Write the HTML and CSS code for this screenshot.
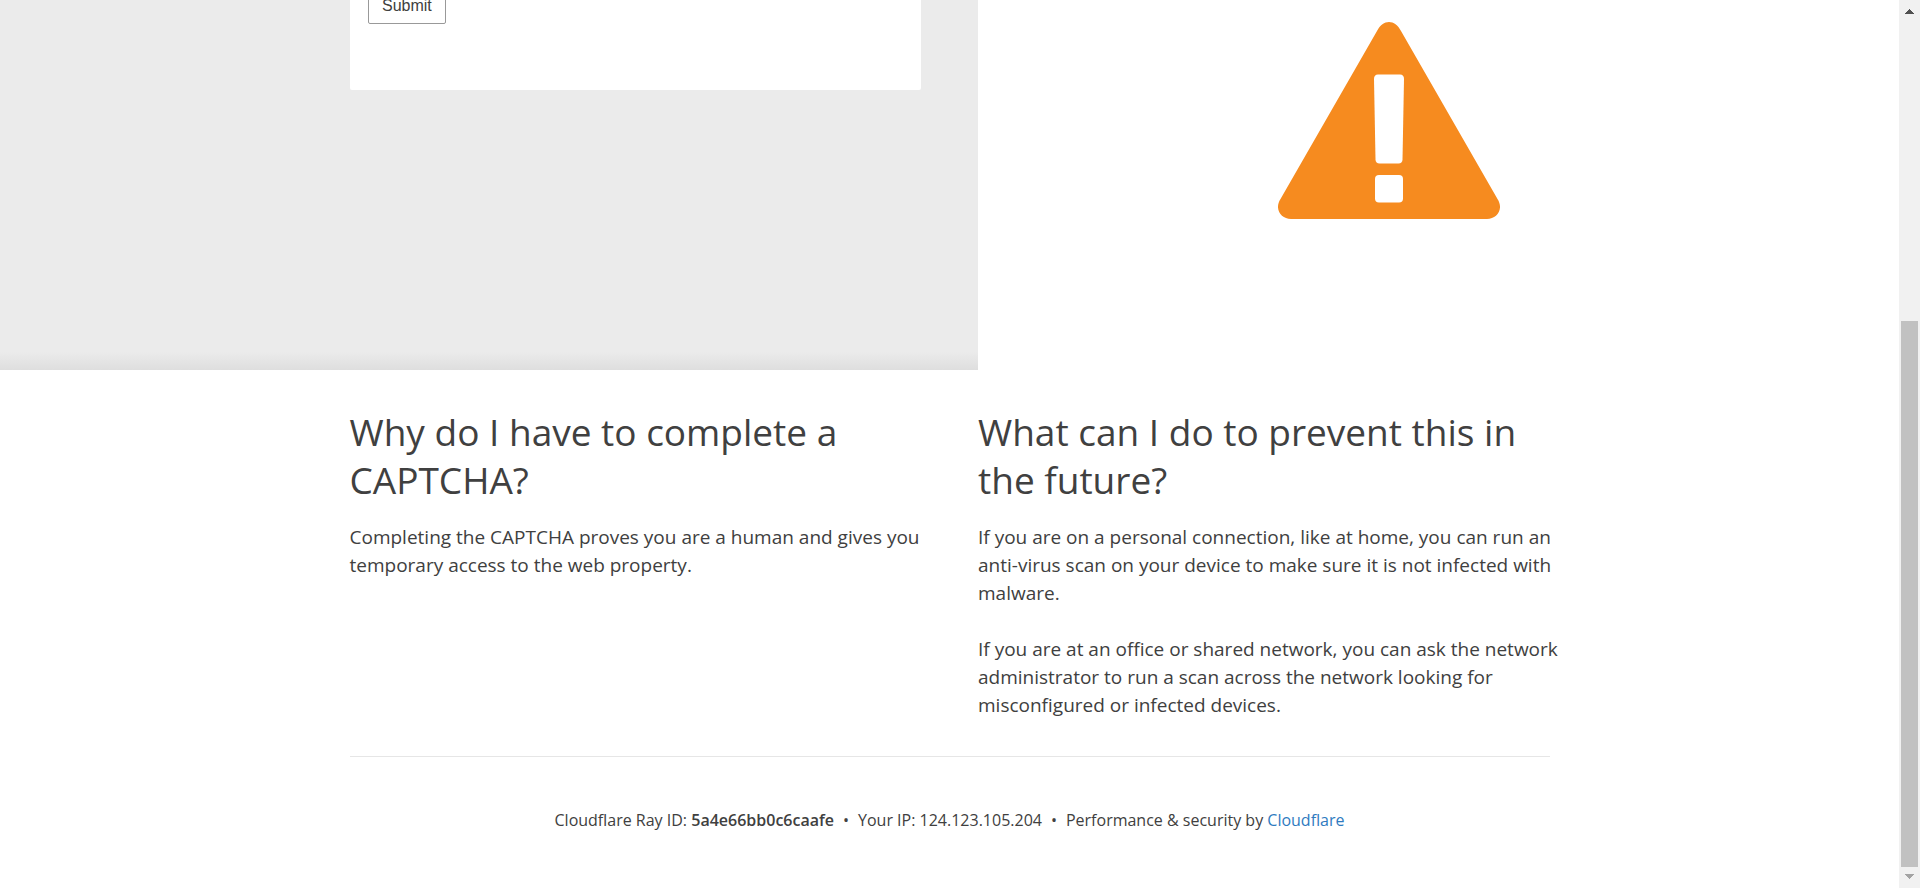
FILE: index.html
```
<!DOCTYPE html>
<html lang="en">
<head>
<meta charset="utf-8">
<title>Attention Required! | Cloudflare</title>
<link rel="stylesheet" href="styles.css">
</head>
<body>
<div class="page">
  <div class="content">
    <section class="hero">
      <div class="hero-shade"></div>
      <form class="card">
        <button class="submit" type="button">Submit</button>
      </form>
      <div class="hero-icon">
        <svg class="warning" viewBox="0 0 222 197" role="img" aria-label="Warning">
          <path fill="#f68b1f" d="M99 9C105-3 117-3 123 9L219.500 177C226 187 219 197 209 197H13C3 197-4 187 2.500 177Z"/>
          <path fill="#fff" d="M100 52.500H122Q126 52.500 126 57L124.500 137.500Q124.300 141.500 120.500 141.500H101.500Q97.700 141.500 97.500 137.500L96 57Q96 52.500 100 52.500Z"/>
          <rect fill="#fff" x="97" y="153" width="28" height="27.500" rx="4"/>
        </svg>
      </div>
    </section>
    <main class="wrapper">
      <div class="columns">
        <section>
          <h2>Why do I have to complete a CAPTCHA?</h2>
          <p>Completing the CAPTCHA proves you are a human and gives you temporary access to the web property.</p>
        </section>
        <section>
          <h2>What can I do to prevent this in the future?</h2>
          <p>If you are on a personal connection, like at home, you can run an anti-virus scan on your device to make sure it is not infected with malware.</p>
          <p>If you are at an office or shared network, you can ask the network administrator to run a scan across the network looking for misconfigured or infected devices.</p>
        </section>
      </div>
      <footer class="footer">
        <span>Cloudflare Ray ID: <strong>5a4e66bb0c6caafe</strong></span>
        <span class="dot">&bull;</span>
        <span>Your IP: 124.123.105.204</span>
        <span class="dot">&bull;</span>
        <span>Performance &amp; security by <a href="#">Cloudflare</a></span>
      </footer>
    </main>
  </div>
  <div class="scrollbar" aria-hidden="true">
    <svg class="arrow" viewBox="0 0 9 5"><path fill="#505050" d="M4 0h1v1h1v1h1v1h1v1h1v1H0V4h1V3h1V2h1V1h1z"/></svg>
    <div class="track"><div class="thumb"></div></div>
    <svg class="arrow" viewBox="0 0 9 5"><path fill="#a3a3a3" d="M4 5h1V4h1V3h1V2h1V1h1V0H0v1h1v1h1v1h1v1h1z"/></svg>
  </div>
</div>
</body>
</html>
```
FILE: styles.css
```
* { box-sizing: border-box; }

body {
  margin: 0;
  background: #fff;
  color: #404040;
  font-family: "Open Sans", "Noto Sans", sans-serif;
  font-size: 19px;
  line-height: 28px;
}

.page {
  display: flex;
  min-height: 100vh;
}

.content {
  flex: 1;
  min-width: 0;
}

.hero {
  display: grid;
  grid-template-columns: 1fr minmax(0, 571px) 57px minmax(0, 571px) 1fr;
  max-height: 370px;
  overflow: hidden;
}

.hero-shade {
  grid-area: 1 / 1 / 2 / 4;
  background: linear-gradient(to top, #dedede, #ebebeb 18px);
}

.card {
  grid-area: 1 / 2 / 2 / 3;
  margin-bottom: 280px;
  padding: 0 18px 66px;
  display: flex;
  align-items: flex-end;
  justify-content: flex-start;
  height: 90px;
  background: #fff;
  border-radius: 0 0 2px 2px;
}

.submit {
  flex: none;
  padding: 8px 13px;
  border: 1px solid #999;
  border-radius: 2px;
  background: #fff;
  color: #404040;
  font: 16px/18px "Liberation Sans", Arial, sans-serif;
}

.hero-icon {
  grid-area: 1 / 4 / 2 / 5;
  padding: 22px 0 0 250px;
  text-align: center;
}

.warning {
  width: 222px;
  max-width: 100%;
}

.wrapper {
  max-width: 1200px;
  margin: 0 auto;
}

.columns {
  display: grid;
  grid-template-columns: 1fr 1fr;
  gap: 57px;
  padding: 38px 0 37px;
  border-bottom: 1px solid #e6e6e6;
}

h2 {
  margin: 0 0 19px;
  font-size: 37px;
  font-weight: 400;
  line-height: 48px;
}

p { margin: 0 -10px 0 0; }

p + p { margin-top: 28px; }

.footer {
  display: flex;
  flex-wrap: wrap;
  justify-content: center;
  padding: 49px 0;
  font-size: 16px;
}

.footer strong { font-weight: 600; }

.footer .dot { padding: 0 9px; }

.footer a {
  color: #2f7bbf;
  text-decoration: none;
}

.scrollbar {
  flex: 0 0 21px;
  display: flex;
  flex-direction: column;
  align-items: center;
  padding: 9px 0;
  background: #f1f1f1;
}

.arrow {
  width: 9px;
  height: 5px;
}

.track {
  flex: 1;
  width: 17px;
  display: flex;
  flex-direction: column;
  justify-content: flex-end;
  padding-bottom: 7px;
}

.thumb {
  height: 64%;
  background: #c1c1c1;
}
```
